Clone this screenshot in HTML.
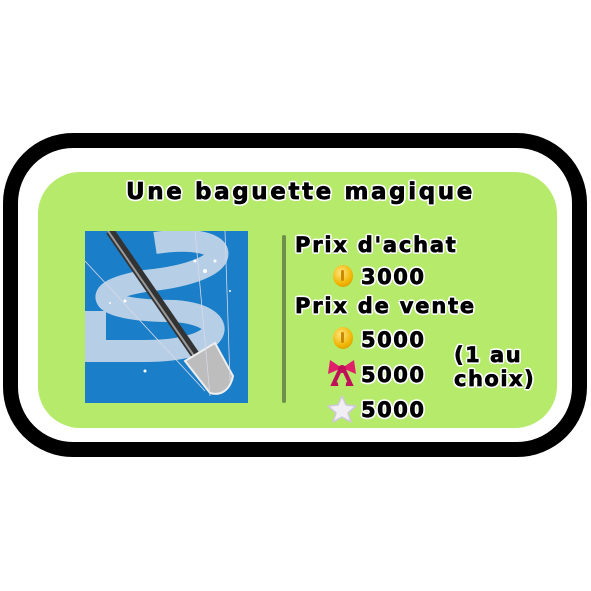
<!DOCTYPE html>
<html><head><style>
body{margin:0;width:591px;height:591px;background:#fff;position:relative;overflow:hidden;font-family:"DejaVu Sans","Liberation Sans",sans-serif;}
.outer{position:absolute;left:3px;top:133px;width:554px;height:294px;border:15px solid #000;border-radius:70px;background:#fff;}
.green{position:absolute;left:38px;top:172px;width:519px;height:256px;border-radius:42px;background:#b5ea6a;}
.t{position:absolute;font-weight:bold;color:#000;font-size:21px;letter-spacing:1.5px;white-space:nowrap;-webkit-text-stroke:0.7px #000;
text-shadow:2px 0 #fff,-2px 0 #fff,0 2px #fff,0 -2px #fff,1.5px 1.5px #fff,-1.5px 1.5px #fff,1.5px -1.5px #fff,-1.5px -1.5px #fff;}
.bar{position:absolute;left:282px;top:235px;width:4px;height:168px;background:#6f8f4a;border-radius:2px;}
.coin{position:absolute;width:20px;height:22px;border-radius:50%;background:radial-gradient(circle at 40% 35%,#ffe680,#f0b400 60%,#c98a00);}
.coin:after{content:"";position:absolute;left:8px;top:5px;width:3px;height:11px;background:#c98a00;border-radius:2px;}
</style></head><body>
<div class="outer"></div>
<div class="green"></div>
<div class="t" style="left:126px;top:179px;font-size:23px;letter-spacing:2.6px;">Une baguette magique</div>
<svg style="position:absolute;left:85px;top:231px" width="163" height="172" viewBox="0 0 163 172">
<rect width="163" height="172" fill="#1a7fc8"/>
<path d="M70 12 C150 0 160 40 60 50 C0 60 10 80 90 80 C150 85 140 120 60 120 L10 120 L10 80" fill="none" stroke="#b6cfe6" stroke-width="22"/>
<g fill="#fff"><circle cx="120" cy="40" r="2"/><circle cx="130" cy="30" r="1.5"/><circle cx="110" cy="30" r="1.5"/><circle cx="40" cy="70" r="1.5"/><circle cx="25" cy="72" r="1"/><circle cx="60" cy="140" r="1.5"/><circle cx="145" cy="60" r="1"/></g>
<line x1="25" y1="0" x2="118" y2="135" stroke="#333" stroke-width="9"/>
<line x1="23" y1="0" x2="116" y2="135" stroke="#999" stroke-width="2"/>
<path d="M100 130 L130 112 L148 145 C145 160 135 165 125 162 Z" fill="#bdbdbd" stroke="#eee" stroke-width="2"/>
<path d="M0 30 L120 160 M140 0 L145 150 M110 0 L125 165" stroke="#d8d8e8" stroke-width="0.8" fill="none"/>
</svg>
<div class="bar"></div>
<div class="t" style="left:295px;top:233px;letter-spacing:1.8px;">Prix d'achat</div>
<div class="coin" style="left:333px;top:265px"></div>
<div class="t" style="left:361px;top:265px;">3000</div>
<div class="t" style="left:295px;top:294px;letter-spacing:1.8px;">Prix de vente</div>
<div class="coin" style="left:333px;top:327px"></div>
<div class="t" style="left:361px;top:328px;">5000</div>
<svg style="position:absolute;left:327px;top:358px" width="30" height="28" viewBox="0 0 30 28"><path d="M15 10 L3 2 L1 16 Z M15 10 L27 2 L29 16 Z" fill="#e0206a"/><path d="M13 12 L6 27 L11 26 M17 12 L24 27 L19 26" stroke="#c0105a" stroke-width="4" fill="none"/><circle cx="15" cy="11" r="4" fill="#c0105a"/></svg>
<div class="t" style="left:361px;top:363px;">5000</div>
<svg style="position:absolute;left:327px;top:395px" width="30" height="28" viewBox="0 0 30 28"><path d="M15 1 L19 10 L29 11 L21 18 L24 27 L15 22 L6 27 L9 18 L1 11 L11 10 Z" fill="#f2eef5" stroke="#d0c8dc" stroke-width="1.5" stroke-linejoin="round"/></svg>
<div class="t" style="left:361px;top:398px;">5000</div>
<div class="t" style="left:454px;top:343px;line-height:24px;">(1 au<br>choix)</div>
</body></html>
